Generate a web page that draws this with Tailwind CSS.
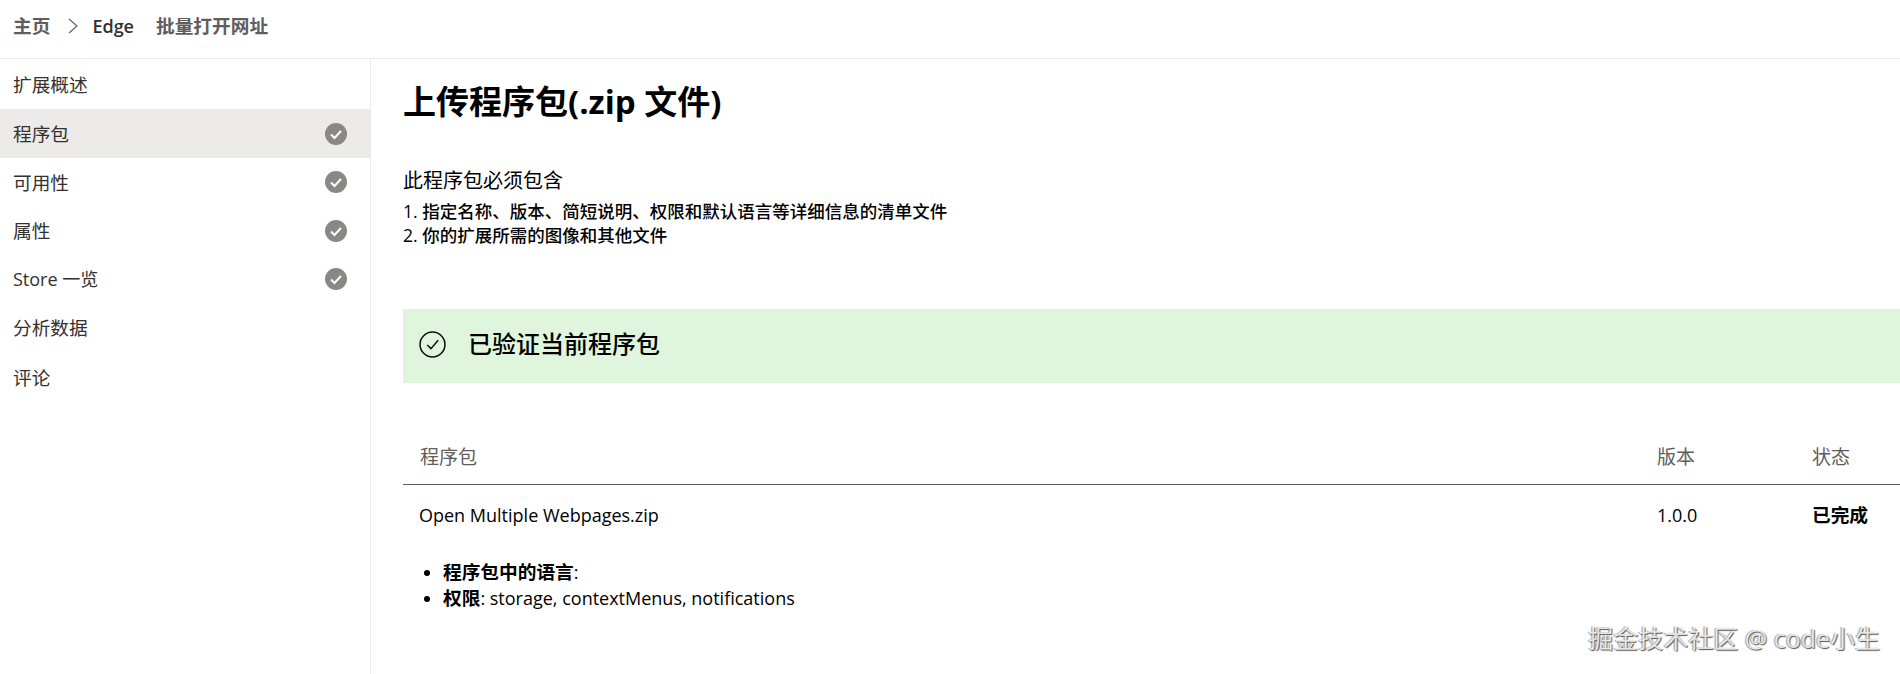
<!DOCTYPE html>
<html lang="zh-CN">
<head>
  <meta charset="UTF-8">
  <title>上传程序包</title>
  <script src="https://cdn.jsdelivr.net/npm/@tailwindcss/browser@4"></script>
</head>
<body class="relative h-[674px] overflow-hidden bg-white text-[18px] text-[#323130] font-['Open_Sans','Noto_Sans_CJK_SC',sans-serif]">
  <!-- Top breadcrumb -->
  <header class="flex h-[59px] items-center border-b border-[#edebe9] pb-[6px] pl-[13px] font-semibold">
    <span class="text-[18.7px] text-[#605e5c]">主页</span>
    <svg class="ml-[18px] mr-[14px]" width="10" height="16" viewBox="0 0 10 16" fill="none" stroke="#605e5c" stroke-width="1.1"><path d="M1 1l8 7-8 7"/></svg>
    <span>Edge</span>
    <span class="ml-[22px] text-[18.7px] text-[#605e5c]">批量打开网址</span>
  </header>

  <div class="flex h-[615px]">
    <!-- Side nav -->
    <nav class="w-[371px] shrink-0 border-r border-[#edebe9] text-[18.7px]">
      <div class="flex h-[50px] items-center pl-[13px] pt-[2px]">扩展概述</div>
      <div class="flex h-[49px] items-center justify-between bg-[#edebe9] pl-[13px] pr-[23px]">
        <span class="pt-[2px]">程序包</span>
        <svg width="22" height="22" viewBox="0 0 22 22"><circle cx="11" cy="11" r="11" fill="#8a8886"/><path d="M6 11.5l3.5 3.5 6.5-7" fill="none" stroke="#fff" stroke-width="2"/></svg>
      </div>
      <div class="flex h-[49px] items-center justify-between pl-[13px] pr-[23px]">
        <span class="pt-[2px]">可用性</span>
        <svg class="mb-[1px]" width="22" height="22" viewBox="0 0 22 22"><circle cx="11" cy="11" r="11" fill="#8a8886"/><path d="M6 11.5l3.5 3.5 6.5-7" fill="none" stroke="#fff" stroke-width="2"/></svg>
      </div>
      <div class="flex h-[48px] items-center justify-between pl-[13px] pr-[23px]">
        <span>属性</span>
        <svg class="mb-[1px]" width="22" height="22" viewBox="0 0 22 22"><circle cx="11" cy="11" r="11" fill="#8a8886"/><path d="M6 11.5l3.5 3.5 6.5-7" fill="none" stroke="#fff" stroke-width="2"/></svg>
      </div>
      <div class="flex h-[49px] items-center justify-between pl-[13px] pr-[23px]">
        <span class="text-[18px]">Store 一览</span>
        <svg class="mb-[1px]" width="22" height="22" viewBox="0 0 22 22"><circle cx="11" cy="11" r="11" fill="#8a8886"/><path d="M6 11.5l3.5 3.5 6.5-7" fill="none" stroke="#fff" stroke-width="2"/></svg>
      </div>
      <div class="flex h-[49px] items-center pl-[13px]">分析数据</div>
      <div class="flex h-[49px] items-center pl-[13px] pt-[2px]">评论</div>
    </nav>

    <!-- Main content -->
    <main class="min-w-0 flex-1 pl-[32px] text-black">
      <h1 class="mt-[20px] text-[33px] leading-[46px] font-bold">上传程序包(.zip 文件)</h1>
      <p class="mt-[43px] text-[20px] leading-[26px]">此程序包必须包含</p>
      <ol class="mt-[5px] text-[17.5px] leading-[24px] font-medium">
        <li>1. 指定名称、版本、简短说明、权限和默认语言等详细信息的清单文件</li>
        <li>2. 你的扩展所需的图像和其他文件</li>
      </ol>

      <div class="mt-[62px] flex h-[74px] items-center bg-[#dff6dd] pb-[4px] pl-[16px]">
        <svg width="27" height="27" viewBox="0 0 26 26" fill="none" stroke="#111" stroke-width="1.5"><circle cx="13" cy="13" r="12"/><path d="M8 13.5l3.5 3.5 7-8"/></svg>
        <span class="ml-[22px] text-[24px] font-medium">已验证当前程序包</span>
      </div>

      <!-- Package table -->
      <div class="mt-[48px] flex h-[54px] items-center border-b border-[#605e5c] pl-[17px] text-[19px] text-[#605e5c]">
        <span class="flex-1">程序包</span>
        <span class="w-[155px]">版本</span>
        <span class="w-[88px]">状态</span>
      </div>
      <div class="flex h-[62px] items-center pb-[2px] pl-[16px]">
        <span class="flex-1">Open Multiple Webpages.zip</span>
        <span class="w-[155px]">1.0.0</span>
        <span class="w-[88px] text-[18.7px] font-bold">已完成</span>
      </div>
      <ul class="ml-[40px] mt-[12px] list-disc text-[18px] leading-[26px]">
        <li><b class="text-[18.7px]">程序包中的语言</b>:</li>
        <li><b class="text-[18.7px]">权限</b>: storage, contextMenus, notifications</li>
      </ul>
    </main>
  </div>

  <!-- Watermark -->
  <div class="absolute right-[20px] top-[622px] text-[25px] leading-[32px] text-white/80 [text-shadow:1px_1px_1px_#555,-1px_0_1px_#999]">掘金技术社区 @ code小生</div>
</body>
</html>
